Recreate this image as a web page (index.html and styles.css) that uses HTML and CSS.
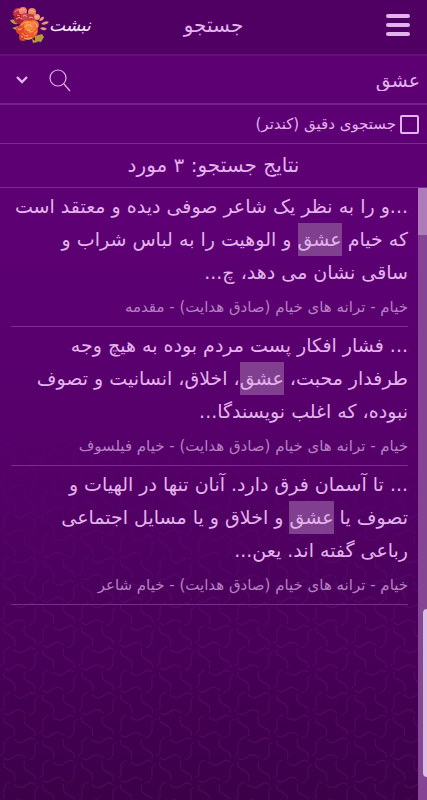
FILE: index.html
```html
<!DOCTYPE html>
<html lang="fa" dir="rtl">
<head>
    <meta charset="UTF-8">
    <meta name="viewport" content="width=device-width, initial-scale=1.0">
    <title>جستجو</title>
    <link rel="stylesheet" href="styles.css">
</head>
<body>
    <header class="topbar">
        <button class="menu-btn" type="button" aria-label="منو"><span></span><span></span><span></span></button>
        <h1>جستجو</h1>
        <a class="logo" href="#">
            <span class="logo-text">نبشت</span>
            <svg class="logo-flower" viewBox="0 0 40 38" aria-hidden="true">
                <!-- leaves -->
                <path d="M1 14q5-2 8 4-6 1-8-4zM3 22l6-2v5zM26 30l7-2 2 3-3 5-6-1zM23 33l6 3-5 1z" fill="#b59a3a"/>
                <path d="M30 15q2-5 5-4 0 4-5 4zM32 18q4-4 8-2-3 4-8 2zM31 22q4-2 7 1-4 3-7-1z" fill="#e89a78"/>
                <!-- small blooms -->
                <circle cx="9" cy="7" r="5" fill="#c9304a"/>
                <circle cx="14" cy="5" r="4" fill="#f0806a"/>
                <circle cx="10" cy="13" r="5" fill="#a81f38"/>
                <circle cx="16" cy="11" r="4" fill="#d4404a"/>
                <circle cx="23" cy="6" r="4" fill="#e88a62"/>
                <circle cx="22" cy="12" r="4" fill="#c23a40"/>
                <circle cx="28" cy="11" r="3" fill="#ef9a72"/>
                <path d="M6 6q3-4 6-1M12 4q2-2 4 0M7 13q3-3 6 0M14 10q3-2 4 1M21 5q2-2 4 1M20 12q2-2 4 0M8 9l3 1M26 10l3 1" stroke="#ffc0a0" stroke-width=".8" fill="none"/>
                <!-- main bloom -->
                <circle cx="19" cy="24" r="10" fill="#ec5c2a"/>
                <circle cx="11" cy="24" r="4" fill="#e0482c"/>
                <circle cx="25" cy="19" r="5" fill="#f0703a"/>
                <circle cx="14" cy="31" r="4" fill="#d9442a"/>
                <circle cx="20" cy="20" r="5" fill="#f58a3e"/>
                <path d="M9 23q2 2 4-1M12 19q3-4 7-3M16 21q3-4 7-1M24 16q4 1 4 5M13 27q2 4 6 3M20 26q4 1 6-3M18 24l3 1M15 32q4 2 8 0M25 28l3-3M12 30l2 1" stroke="#ffc27a" stroke-width=".9" fill="none"/>
            </svg>
        </a>
    </header>
    <form class="search">
        <div class="search-row">
            <input class="query" type="text" value="عشق" aria-label="جستجو">
            <button class="icon-btn" type="submit" aria-label="جستجو">
                <svg width="22" height="24" viewBox="0 0 22 24"><circle cx="9" cy="10" r="8"/><path d="M15 16l6 7"/></svg>
            </button>
            <button class="icon-btn more" type="button" aria-label="بیشتر">
                <svg width="14" height="10" viewBox="0 0 14 10"><path d="M2 2l5 5 5-5"/></svg>
            </button>
        </div>
        <div class="exact">
            <input type="checkbox" id="exact">
            <label for="exact">جستجوی دقیق (کندتر)</label>
        </div>
    </form>
    <h2 class="count">نتایج جستجو: ۳ مورد</h2>
    <main class="results">
        <div class="scrollbar"><div class="thumb"></div></div>
        <div class="list">
            <article class="item">
                <p class="text">...و را به نظر یک شاعر صوفی دیده و معتقد است<br>که خیام <mark>عشق</mark> و الوهیت را به لباس شراب و<br>ساقی نشان می دهد، چ...</p>
                <p class="source">خیام - ترانه های خیام (صادق هدایت) - مقدمه</p>
            </article>
            <article class="item">
                <p class="text">... فشار افکار پست مردم بوده به هیچ وجه<br>طرفدار محبت، <mark>عشق</mark>، اخلاق، انسانیت و تصوف<br>نبوده، که اغلب نویسندگا...</p>
                <p class="source">خیام - ترانه های خیام (صادق هدایت) - خیام فیلسوف</p>
            </article>
            <article class="item">
                <p class="text">... تا آسمان فرق دارد. آنان تنها در الهیات و<br>تصوف یا <mark>عشق</mark> و اخلاق و یا مسایل اجتماعی<br>رباعی گفته اند. یعن...</p>
                <p class="source">خیام - ترانه های خیام (صادق هدایت) - خیام شاعر</p>
            </article>
        </div>
    </main>
    <div class="edge-handle"></div>
</body>
</html>
```
FILE: styles.css
```css
* {
    box-sizing: border-box;
}

body {
    margin: 0;
    min-height: 100vh;
    display: flex;
    flex-direction: column;
    font-family: "DejaVu Sans", sans-serif;
    color: #e3b3ec;
    background: linear-gradient(#5d0074 0, #5d0074 25%, #56006a 55%, #480058 80%, #3b0048 100%);
    position: relative;
}

/* faint ornament, only visible towards the bottom */
body::before {
    content: "";
    position: absolute;
    inset: 50% 0 0 0;
    z-index: -1;
    background: url("data:image/svg+xml,%3Csvg xmlns='http://www.w3.org/2000/svg' width='78' height='45' fill='none' stroke='%23a030b0' stroke-opacity='.2'%3E%3Cdefs%3E%3Cpath id='a' d='M4 -7v-9q0-5 7-7M4-7l-4 3'/%3E%3Cg id='s'%3E%3Cuse href='%23a'/%3E%3Cuse href='%23a' transform='rotate(60)'/%3E%3Cuse href='%23a' transform='rotate(120)'/%3E%3Cuse href='%23a' transform='rotate(180)'/%3E%3Cuse href='%23a' transform='rotate(240)'/%3E%3Cuse href='%23a' transform='rotate(300)'/%3E%3C/g%3E%3C/defs%3E%3Cuse href='%23s'/%3E%3Cuse href='%23s' x='78'/%3E%3Cuse href='%23s' y='45'/%3E%3Cuse href='%23s' x='78' y='45'/%3E%3Cuse href='%23s' x='39' y='22.5'/%3E%3C/svg%3E");
    -webkit-mask-image: linear-gradient(transparent, #000 60%);
    mask-image: linear-gradient(transparent, #000 60%);
}

h1, h2, p {
    margin: 0;
    font-weight: normal;
}

button {
    background: none;
    border: none;
    padding: 0;
    cursor: pointer;
}

/* Top bar */
.topbar {
    display: grid;
    grid-template-columns: 1fr auto 1fr;
    align-items: center;
    height: 56px;
    padding: 0 9px 4px;
    background: #500062;
    border-bottom: 2px solid #601373;
}

.topbar h1 {
    font-size: 20px;
}

.menu-btn {
    display: flex;
    flex-direction: column;
    gap: 5px;
    width: 24px;
    margin-right: 8px;
}

.menu-btn span {
    height: 4px;
    border-radius: 2px;
    background: #e3b3ec;
}

.logo {
    display: flex;
    align-items: center;
    justify-content: flex-end;
    color: #fbe6ff;
    text-decoration: none;
}

.logo-text {
    font-size: 17px;
    font-style: italic;
}

.logo-flower {
    width: 40px;
    height: 38px;
}

/* Search form */
.search-row {
    display: flex;
    align-items: center;
    height: 49px;
    padding: 0 7px 0 15px;
    border-bottom: 2px solid #752189;
}

.query {
    flex: 1;
    min-width: 0;
    height: 40px;
    padding: 0;
    border: none;
    outline: none;
    background: none;
    color: inherit;
    font: inherit;
    font-size: 19px;
    line-height: 36px;
}

.icon-btn {
    display: flex;
}

.icon-btn svg {
    fill: none;
    stroke: #e3b3ec;
    stroke-width: 1.2;
}

.icon-btn.more {
    margin-right: 20px;
}

.icon-btn.more svg {
    stroke-width: 2.4;
}

.exact {
    display: flex;
    align-items: center;
    gap: 4px;
    height: 39px;
    padding: 0 8px;
    border-bottom: 1px solid #7d2b91;
    font-size: 15px;
}

.exact input {
    appearance: none;
    width: 19px;
    height: 19px;
    margin: 0;
    border: 2px solid #e3b3ec;
    border-radius: 2px;
}

.exact input:checked {
    background: #e3b3ec;
}

.count {
    height: 44px;
    line-height: 43px;
    border-bottom: 1px solid #7d2b91;
    font-size: 20px;
    text-align: center;
}

/* Results */
.results {
    flex: 1;
    display: flex;
}

.scrollbar {
    flex: none;
    width: 9px;
    background: #854594;
}

.thumb {
    height: 47px;
    background: #b07bbb;
}

.list {
    flex: 1;
    min-width: 0;
    padding: 0 10px 0 11px;
}

.item {
    padding: 2px 0 6px;
    border-bottom: 1px solid #7d2b91;
}

.text {
    font-size: 19px;
    line-height: 33px;
    white-space: nowrap;
}

.text mark {
    display: inline-block;
    background: #81408f;
    color: inherit;
}

.source {
    margin-top: 5px;
    font-size: 15px;
    line-height: 26px;
    color: #b581c2;
}

.edge-handle {
    position: absolute;
    top: 609px;
    right: 0;
    width: 4px;
    height: 168px;
    border-radius: 4px 0 0 4px;
    background: #dcc2e2;
}
```
